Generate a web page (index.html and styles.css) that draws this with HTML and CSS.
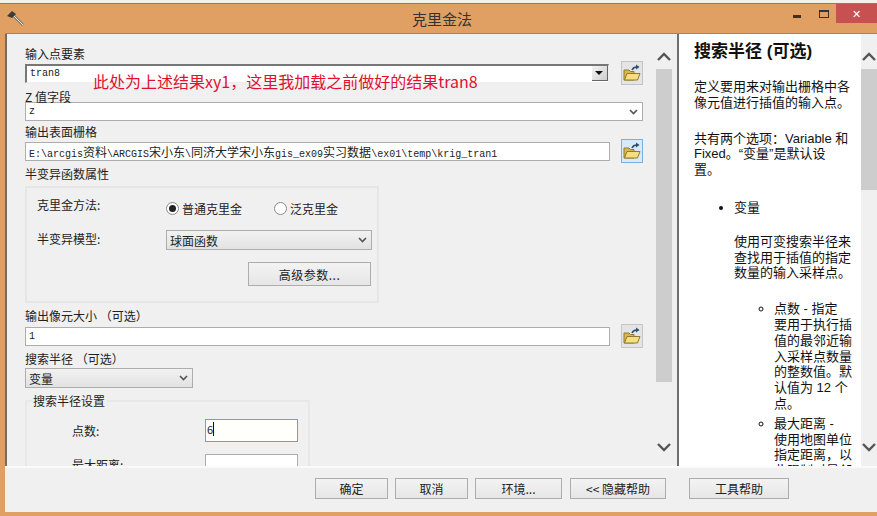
FILE: index.html
```html
<!DOCTYPE html>
<html lang="zh-CN">
<head>
    <meta charset="UTF-8">
    <title>克里金法</title>
    <link rel="stylesheet" href="styles.css">
</head>
<body>
    <div class="top-strip"></div>
    <div class="window">
        <div class="titlebar">
            <svg class="tool-icon" width="18" height="18" viewBox="0 0 18 18">
                <path d="M8 7 L17 16" stroke="#8a7a68" stroke-width="3"/>
                <path d="M8 7 L17 16" stroke="#e8e0d0" stroke-width="1"/>
                <path d="M1 7 L6 2 L10 5 L6 9 Z" fill="#3c3c3c"/>
            </svg>
            <div class="title">克里金法</div>
            <div class="win-controls">
                <div class="win-btn"><span class="min-glyph"></span></div>
                <div class="win-btn"><span class="max-glyph"></span></div>
                <div class="win-close">✕</div>
            </div>
        </div>

        <div class="client">
            <div class="main">
                <div class="form-panel">
                    <div class="label">输入点要素</div>
                    <div class="field-row">
                        <div class="combo combo-sunken"><span>tran8</span><span class="combo-arrow"></span></div>
                        <button class="browse"><svg class="folder"><use href="#folder"/></svg></button>
                    </div>

                    <div class="label label-tight">Z 值字段</div>
                    <div class="combo combo-full">
                        <span>z</span>
                        <svg class="chevron" width="9" height="6" viewBox="0 0 9 6"><path d="M1 1 L4.5 4.5 L8 1" fill="none" stroke="#555" stroke-width="1.6"/></svg>
                    </div>

                    <div class="label label-gap">输出表面栅格</div>
                    <div class="field-row">
                        <div class="text-input">E:\arcgis<span class="cn">资料</span>\ARCGIS<span class="cn">宋小东</span>\<span class="cn">同济大学宋小东</span>gis_ex09<span class="cn">实习数据</span>\ex01\temp\krig_tran1</div>
                        <button class="browse browse-active"><svg class="folder"><use href="#folder"/></svg></button>
                    </div>

                    <div class="label label-gap">半变异函数属性</div>
                    <div class="group">
                        <div class="group-label">克里金方法:</div>
                        <div class="radios">
                            <span class="radio radio-on"></span><span class="radio-text">普通克里金</span>
                            <span class="radio"></span><span>泛克里金</span>
                        </div>
                        <div class="group-label">半变异模型:</div>
                        <div class="dropdown dropdown-model">
                            <span>球面函数</span>
                            <svg class="chevron" width="9" height="6" viewBox="0 0 9 6"><path d="M1 1 L4.5 4.5 L8 1" fill="none" stroke="#555" stroke-width="1.6"/></svg>
                        </div>
                        <button class="btn btn-advanced">高级参数...</button>
                    </div>

                    <div class="label label-after-group">输出像元大小 （可选）</div>
                    <div class="field-row">
                        <div class="text-input">1</div>
                        <button class="browse"><svg class="folder"><use href="#folder"/></svg></button>
                    </div>

                    <div class="label label-gap">搜索半径 （可选）</div>
                    <div class="dropdown dropdown-radius">
                        <span>变量</span>
                        <svg class="chevron" width="9" height="6" viewBox="0 0 9 6"><path d="M1 1 L4.5 4.5 L8 1" fill="none" stroke="#555" stroke-width="1.6"/></svg>
                    </div>

                    <fieldset class="radius-set">
                        <legend>搜索半径设置</legend>
                        <div class="radius-row">
                            <span class="radius-label">点数:</span>
                            <div class="small-input small-input-focus">6<span class="caret"></span></div>
                        </div>
                        <div class="radius-row">
                            <span class="radius-label radius-label-cut">最大距离:</span>
                            <div class="small-input"></div>
                        </div>
                    </fieldset>
                </div>

                <div class="scrollbar">
                    <svg class="scroll-arrow" width="16" height="10" viewBox="0 0 16 10"><path d="M2 8 L8 2 L14 8" fill="none" stroke="#555" stroke-width="2.4"/></svg>
                    <div class="track"><div class="thumb thumb-form"></div></div>
                    <svg class="scroll-arrow" width="16" height="10" viewBox="0 0 16 10"><path d="M2 2 L8 8 L14 2" fill="none" stroke="#555" stroke-width="2.4"/></svg>
                </div>

                <div class="help-panel">
                    <h1>搜索半径 (可选)</h1>
                    <p>定义要用来对输出栅格中各<br>像元值进行插值的输入点。</p>
                    <p class="help-second">共有两个选项：Variable 和<br>Fixed。“变量”是默认设<br>置。</p>
                    <ul class="help-list">
                        <li>变量
                            <p class="help-sub">使用可变搜索半径来<br>查找用于插值的指定<br>数量的输入采样点。</p>
                            <ul class="help-options">
                                <li>点数 - 指定<br>要用于执行插<br>值的最邻近输<br>入采样点数量<br>的整数值。默<br>认值为 12 个<br>点。</li>
                                <li>最大距离 -<br>使用地图单位<br>指定距离，以<br>此限制对最邻</li>
                            </ul>
                        </li>
                    </ul>
                </div>

                <div class="scrollbar">
                    <svg class="scroll-arrow" width="16" height="10" viewBox="0 0 16 10"><path d="M2 8 L8 2 L14 8" fill="none" stroke="#555" stroke-width="2.4"/></svg>
                    <div class="track"><div class="thumb thumb-help"></div></div>
                    <svg class="scroll-arrow" width="16" height="10" viewBox="0 0 16 10"><path d="M2 2 L8 8 L14 2" fill="none" stroke="#555" stroke-width="2.4"/></svg>
                </div>
            </div>

            <div class="button-bar">
                <button class="btn btn-ok">确定</button>
                <button class="btn btn-ok">取消</button>
                <button class="btn btn-env">环境...</button>
                <button class="btn btn-hide">&lt;&lt; 隐藏帮助</button>
                <button class="btn btn-tool">工具帮助</button>
            </div>
        </div>

        <div class="note">此处为上述结果xy1，这里我加载之前做好的结果tran8</div>
    </div>

    <svg width="0" height="0" class="defs">
        <symbol id="folder" viewBox="0 0 18 18">
            <path d="M1 6 H6 L7.500 7.500 H11 V16 H1 Z" fill="#d9b64a" stroke="#8f7a35" stroke-width="1"/>
            <path d="M1.500 16 L4 9.500 H17 L14.500 16 Z" fill="#f6de7e" stroke="#8f7a35" stroke-width="1"/>
            <path d="M9 6 C10 3.500 12 3 14 3" fill="none" stroke="#2f4f6f" stroke-width="1.500"/>
            <path d="M13 0.500 L16.500 3 L13 5.500 Z" fill="#2f4f6f"/>
        </symbol>
    </svg>
</body>
</html>
```

FILE: styles.css
```css
* {
    box-sizing: border-box;
}

body {
    margin: 0;
    width: 877px;
    height: 516px;
    overflow: hidden;
    background-color: #fff;
    font-family: "Noto Sans CJK SC", "Liberation Sans", sans-serif;
    font-size: 12px;
    color: #222;
}

.top-strip {
    height: 3px;
    background-color: #f4f1ea;
}

.window {
    position: relative;
    height: 513px;
    background-color: #e0a064;
    padding: 0 0 4px 5px;
    display: flex;
    flex-direction: column;
    border-top: 1px solid #8c7a68;
}

.titlebar {
    height: 29px;
    display: flex;
    align-items: flex-start;
    position: relative;
    flex-shrink: 0;
}

.tool-icon {
    margin: 5px 0 0 1px;
}

.title {
    position: absolute;
    left: 407px;
    top: 5px;
    font-size: 15px;
    line-height: 20px;
    color: #333;
}

.win-controls {
    margin-left: auto;
    display: flex;
    height: 19px;
}

.win-btn {
    width: 27px;
    display: flex;
    align-items: center;
    justify-content: center;
}

.min-glyph {
    width: 8px;
    height: 3px;
    margin-top: 6px;
    background-color: #333;
}

.max-glyph {
    width: 10px;
    height: 8px;
    border: 1px solid #333;
    border-top-width: 2px;
}

.win-close {
    width: 41px;
    margin-left: -1px;
    background-color: #c75050;
    color: #fff;
    font-size: 11px;
    line-height: 19px;
    text-align: center;
}

.client {
    flex: 1;
    min-height: 0;
    display: flex;
    flex-direction: column;
    background-color: #f0f0f0;
}

.main {
    height: 435px;
    display: flex;
    border-top: 1px solid #8a8a8a;
    border-bottom: 2px solid #fafafa;
    flex-shrink: 0;
}

/* form column */
.form-panel {
    width: 651px;
    height: 100%;
    overflow: hidden;
    border-left: 2px solid #6e6e6e;
    padding: 11px 0 0 18px;
    flex-shrink: 0;
}

.label {
    height: 16px;
    line-height: 18px;
    font-size: 12px;
}

.label-tight {
    margin-top: 3px;
    margin-bottom: -2px;
}

.label-gap {
    margin-top: 2px;
}

.label-after-group {
    margin-top: 4px;
    margin-bottom: 1px;
}

.field-row {
    height: 24px;
    display: flex;
    align-items: center;
    justify-content: space-between;
    width: 618px;
}

.combo {
    height: 19px;
    width: 584px;
    display: flex;
    align-items: center;
    justify-content: space-between;
    background-color: #fff;
    border: 1px solid #adadad;
    padding: 0 3px;
    font-family: "Liberation Mono", "Noto Sans CJK SC", monospace;
    font-size: 10px;
}

.combo-sunken {
    border-color: #777 #eee #eee #777;
    border-width: 2px 1px 1px 2px;
    padding-right: 0;
}

.combo-arrow {
    width: 16px;
    height: 15px;
    background: linear-gradient(135deg, #f4f4f4, #cfcfcf);
    border-right: 1px solid #666;
    border-bottom: 1px solid #666;
    position: relative;
}

.combo-arrow::after {
    content: "";
    position: absolute;
    left: 3px;
    top: 5px;
    border-left: 4px solid transparent;
    border-right: 4px solid transparent;
    border-top: 4px solid #111;
}

.combo-full {
    width: 618px;
    padding-right: 4px;
}

.text-input {
    width: 585px;
    height: 19px;
    border: 1px solid #adadad;
    background-color: #fff;
    padding: 0 3px;
    font-family: "Liberation Mono", "Noto Sans CJK SC", monospace;
    font-size: 10px;
    line-height: 17px;
    color: #222;
    white-space: nowrap;
    overflow: hidden;
}

.text-input .cn {
    font-family: "Noto Sans CJK SC", sans-serif;
    font-size: 12px;
}

.browse {
    width: 22px;
    height: 24px;
    padding: 0;
    background-color: #e4e4e4;
    border: 1px solid #c4c4c4;
    display: flex;
    align-items: center;
    justify-content: center;
}

.browse-active {
    background-color: #d8eafa;
    border-color: #7dafdc;
}

.folder {
    width: 18px;
    height: 18px;
}

.defs {
    position: absolute;
}

/* variogram group */
.group {
    margin-top: 5px;
    width: 354px;
    height: 117px;
    border: 2px solid #e6e6e6;
    padding: 8px 0 0 10px;
    display: grid;
    grid-template-columns: 129px 206px;
    grid-template-rows: 22px 20px 24px;
    row-gap: 12px;
    align-content: start;
}

.group-label {
    line-height: 20px;
    margin-top: -1px;
}

.radios {
    display: flex;
    align-items: center;
    font-size: 12px;
    padding-top: 2px;
}

.radio {
    width: 13px;
    height: 13px;
    border: 1px solid #8a8a8a;
    border-radius: 50%;
    background-color: #fff;
    margin-right: 3px;
    position: relative;
}

.radio-on::after {
    content: "";
    position: absolute;
    left: 2px;
    top: 2px;
    width: 7px;
    height: 7px;
    border-radius: 50%;
    background-color: #222;
}

.radio-text {
    margin-right: 32px;
}

.dropdown {
    height: 20px;
    display: flex;
    align-items: center;
    justify-content: space-between;
    background: linear-gradient(#f2f2f2, #e2e2e2);
    border: 1px solid #adadad;
    padding: 0 4px 0 3px;
}

.chevron {
    flex-shrink: 0;
}

.btn-advanced {
    grid-column: 2;
    width: 123px;
    height: 24px;
    margin-left: 82px;
    letter-spacing: 0.5px;
}

.dropdown-radius {
    width: 168px;
    margin-top: 2px;
}

/* search radius group, cut off by the panel */
.radius-set {
    margin: 6px 0 0;
    width: 285px;
    height: 120px;
    border: 2px solid #e8e8e8;
    padding: 11px 0 0 0;
}

.radius-set legend {
    padding: 0 2px 0 0;
    margin-left: 6px;
    font-size: 12px;
    line-height: 14px;
}

.radius-row {
    display: flex;
    align-items: center;
    height: 23px;
    margin-bottom: 12px;
    padding-left: 45px;
}

.radius-label {
    width: 133px;
}

.radius-label-cut {
    margin-top: -3px;
}

.small-input {
    width: 93px;
    height: 23px;
    border: 1px solid #adadad;
    background-color: #fff;
    padding: 2px 1px;
    font-size: 11px;
    line-height: 15px;
    display: flex;
}

.small-input-focus {
    border-color: #7a9cc0;
    background-color: #fffffb;
}

.caret {
    width: 1px;
    height: 14px;
    background-color: #111;
}

/* scrollbars */
.scrollbar {
    width: 16px;
    height: 100%;
    display: flex;
    flex-direction: column;
    align-items: center;
    padding-top: 18px;
    flex-shrink: 0;
}

.track {
    width: 16px;
    height: 366px;
    margin-top: 7px;
    margin-bottom: 7px;
    background-color: #f0f0f0;
    flex-shrink: 0;
}

.thumb {
    width: 16px;
    background-color: #cdcdcd;
}

.thumb-form {
    height: 313px;
}

.thumb-help {
    height: 121px;
}

/* help column */
.help-panel {
    width: 184px;
    height: 100%;
    margin-left: 5px;
    overflow: hidden;
    background-color: #fff;
    border-left: 2px solid #6e6e6e;
    padding: 7px 0 0 15px;
    font-size: 13px;
    line-height: 15.800px;
    color: #111;
    font-family: "Liberation Sans", "Noto Sans CJK SC", sans-serif;
    flex-shrink: 0;
}

.help-panel h1 {
    margin: 0;
    font-size: 17px;
    line-height: 22px;
    font-weight: bold;
}

.help-panel p {
    margin: 16px 0 0;
}

.help-panel .help-second {
    margin-top: 20px;
}

.help-list {
    list-style: disc;
    margin: 22px 0 0;
    padding: 0 0 0 40px;
}

.help-panel .help-sub {
    margin-top: 18px;
}

.help-options {
    list-style: circle;
    margin: 20px 0 0;
    padding: 0 0 0 40px;
}

.help-options li + li {
    margin-top: 4px;
}

/* bottom buttons */
.button-bar {
    flex: 1;
    display: flex;
    padding: 10px 0 0 310px;
}

.btn {
    height: 21px;
    padding: 0;
    background: linear-gradient(#f3f3f3, #e6e6e6);
    border: 1px solid #adadad;
    font-family: "Noto Sans CJK SC", "Liberation Sans", sans-serif;
    font-size: 12px;
    color: #222;
}

.btn.btn-advanced {
    height: 24px;
}

.btn-ok {
    width: 73px;
    margin-right: 7px;
}

.btn-env {
    width: 87px;
    margin-right: 8px;
}

.btn-hide {
    width: 96px;
    margin-right: 23px;
}

.btn-tool {
    width: 100px;
}

/* red note typed over the screenshot */
.note {
    position: absolute;
    left: 93px;
    top: 66px;
    font-size: 16px;
    line-height: 22px;
    color: #e01030;
    white-space: nowrap;
}
```
